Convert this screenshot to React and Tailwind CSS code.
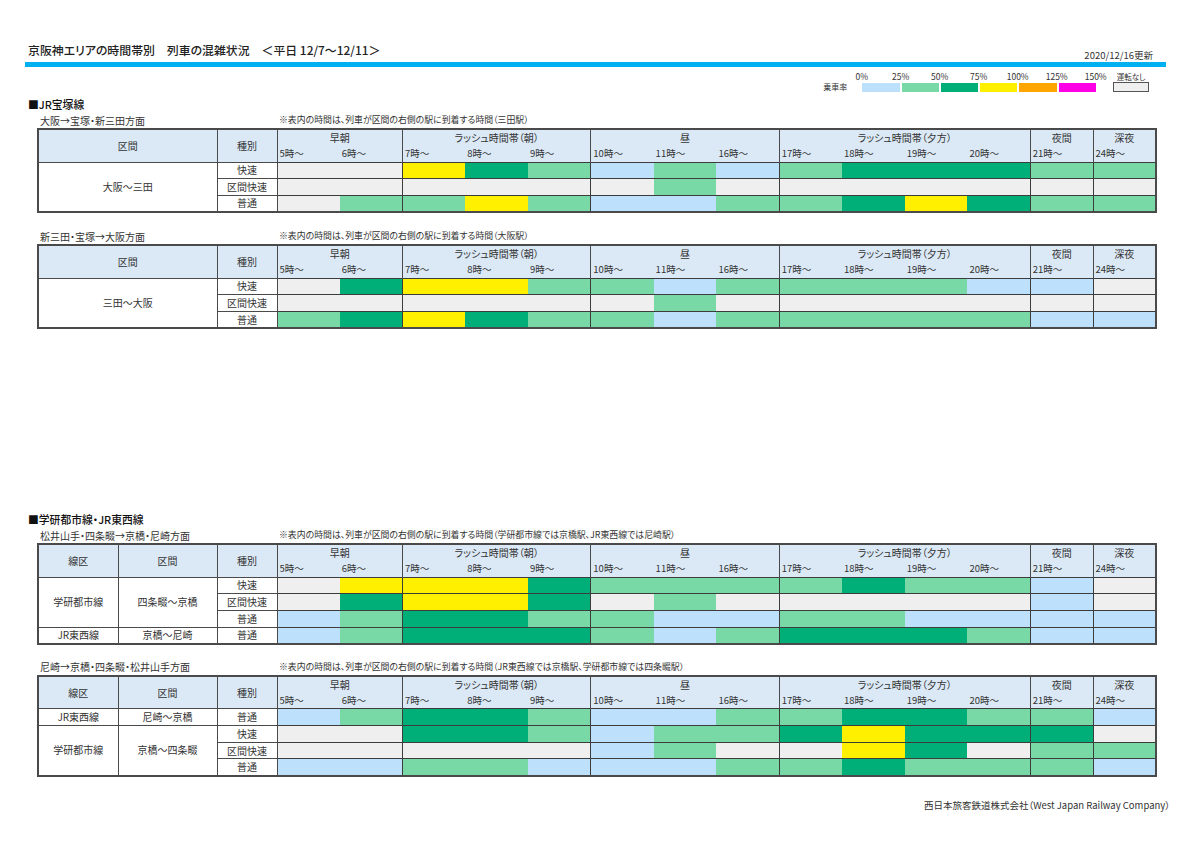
const HOURS = ['5時～', '6時～', '7時～', '8時～', '9時～', '10時～', '11時～', '16時～', '17時～', '18時～', '19時～', '20時～', '21時～', '24時～'];
const PERIODS = [
  ['早朝', 2],
  ['ラッシュ時間帯（朝）', 3],
  ['昼', 3],
  ['ラッシュ時間帯（夕方）', 4],
  ['夜間', 1],
  ['深夜', 1],
];
const PERIOD_STARTS = [2, 5, 8, 12, 13];

const COLORS = {
  g: 'bg-[#efefef]',
  b: 'bg-[#bde0fd]',
  l: 'bg-[#79d9a6]',
  d: 'bg-[#00ae78]',
  y: 'bg-[#fff000]',
};

const LEGEND = [
  ['0%', 'bg-[#bde0fd]'],
  ['25%', 'bg-[#79d9a6]'],
  ['50%', 'bg-[#00ae78]'],
  ['75%', 'bg-[#fff000]'],
  ['100%', 'bg-[#ffa500]'],
  ['125%', 'bg-[#ff00e6]'],
];

// cells: one letter per hour, split by period
const TABLES = [
  {
    title: '大阪→宝塚・新三田方面',
    note: '※表内の時間は、列車が区間の右側の駅に到着する時間（三田駅）',
    groups: [
      {
        section: '大阪～三田',
        rows: [
          ['快速', 'gg' + 'ydl' + 'blb' + 'lddd' + 'll'],
          ['区間快速', 'gg' + 'ggg' + 'glg' + 'gggg' + 'gg'],
          ['普通', 'gl' + 'lyl' + 'bbl' + 'ldyd' + 'll'],
        ],
      },
    ],
  },
  {
    title: '新三田・宝塚→大阪方面',
    note: '※表内の時間は、列車が区間の右側の駅に到着する時間（大阪駅）',
    groups: [
      {
        section: '三田～大阪',
        rows: [
          ['快速', 'gd' + 'yyl' + 'lbl' + 'lllb' + 'bg'],
          ['区間快速', 'gg' + 'ggg' + 'glg' + 'gggg' + 'gg'],
          ['普通', 'ld' + 'ydl' + 'lbl' + 'llll' + 'bb'],
        ],
      },
    ],
  },
  {
    title: '松井山手・四条畷→京橋・尼崎方面',
    note: '※表内の時間は、列車が区間の右側の駅に到着する時間（学研都市線では京橋駅、JR東西線では尼崎駅）',
    groups: [
      {
        line: '学研都市線',
        section: '四条畷～京橋',
        rows: [
          ['快速', 'gy' + 'yyd' + 'lll' + 'ldll' + 'bg'],
          ['区間快速', 'gd' + 'yyd' + 'glg' + 'gggg' + 'bg'],
          ['普通', 'bl' + 'ddl' + 'lbb' + 'llbb' + 'bb'],
        ],
      },
      {
        line: 'JR東西線',
        section: '京橋～尼崎',
        rows: [['普通', 'bl' + 'ddd' + 'lbl' + 'dddl' + 'bb']],
      },
    ],
  },
  {
    title: '尼崎→京橋・四条畷・松井山手方面',
    note: '※表内の時間は、列車が区間の右側の駅に到着する時間（JR東西線では京橋駅、学研都市線では四条畷駅）',
    groups: [
      {
        line: 'JR東西線',
        section: '尼崎～京橋',
        rows: [['普通', 'bl' + 'ddl' + 'bbl' + 'lddl' + 'lb']],
      },
      {
        line: '学研都市線',
        section: '京橋～四条畷',
        rows: [
          ['快速', 'gg' + 'ddl' + 'bll' + 'dydd' + 'dg'],
          ['区間快速', 'gg' + 'ggg' + 'blg' + 'gydg' + 'll'],
          ['普通', 'bb' + 'llb' + 'bbl' + 'ldll' + 'lb'],
        ],
      },
    ],
  },
];

const labelCell = 'border border-[#4a4a4a] p-0 text-center align-middle text-[10px] leading-none';

const CrowdTable = ({ table }) => {
  const hasLine = table.groups[0].line !== undefined;

  return (
    <table className="ml-[37px] w-[1118px] table-fixed border-collapse border-2 border-[#4a4a4a] text-[#333]">
      <colgroup>
        {hasLine ? (
          <>
            <col className="w-[80px]" />
            <col className="w-[99px]" />
          </>
        ) : (
          <col className="w-[179px]" />
        )}
        <col className="w-[60px]" />
        {HOURS.map((h) => (
          <col key={h} className="w-[62.78px]" />
        ))}
      </colgroup>
      <thead className="bg-[#dbe9f6]">
        <tr className="h-[17px]">
          {hasLine && (
            <th rowSpan={2} className={`${labelCell} font-normal`}>線区</th>
          )}
          <th rowSpan={2} className={`${labelCell} font-normal`}>区間</th>
          <th rowSpan={2} className={`${labelCell} font-normal`}>種別</th>
          {PERIODS.map(([name, span]) => (
            <th key={name} colSpan={span} className="border-l border-[#4a4a4a] p-0 text-center text-[10px] leading-none font-normal">
              {name}
            </th>
          ))}
        </tr>
        <tr className="h-[16px]">
          {HOURS.map((h, i) => (
            <th
              key={h}
              className={`p-0 pl-[2px] text-left text-[9.5px] leading-none font-normal ${PERIOD_STARTS.includes(i) ? 'border-l border-[#4a4a4a]' : ''}`}
            >
              {h}
            </th>
          ))}
        </tr>
      </thead>
      <tbody>
        {table.groups.map((group) =>
          group.rows.map(([kind, cells], rowIndex) => (
            <tr key={group.section + kind} className="h-[16.7px]">
              {rowIndex === 0 && hasLine && (
                <td rowSpan={group.rows.length} className={labelCell}>{group.line}</td>
              )}
              {rowIndex === 0 && (
                <td rowSpan={group.rows.length} className={labelCell}>{group.section}</td>
              )}
              <td className={labelCell}>{kind}</td>
              {cells.split('').map((c, i) => (
                <td
                  key={i}
                  className={`border-t border-b border-[#3c3c3c] p-0 ${COLORS[c]} ${PERIOD_STARTS.includes(i) ? 'border-l' : ''}`}
                />
              ))}
            </tr>
          )),
        )}
      </tbody>
    </table>
  );
};

const TableTitle = ({ title, note }) => (
  <div className="flex h-[15px] items-center pl-[40px] text-[#333]">
    <span className="w-[239px] text-[10px] leading-none">{title}</span>
    <span className="text-[8.9px] leading-none">{note}</span>
  </div>
);

const Legend = () => (
  <div className="flex h-[25px] items-end justify-end pr-[51px] text-[#333]">
    <span className="mr-[15px] mb-[1px] text-[8px] leading-none">乗車率</span>
    <div>
      <div className="-mx-[20px] mb-[3px] flex">
        {[...LEGEND.map((l) => l[0]), '150%'].map((label) => (
          <span key={label} className="w-[39px] text-center text-[8.5px] leading-none">{label}</span>
        ))}
      </div>
      <div className="flex gap-[2px]">
        {LEGEND.map(([label, color]) => (
          <div key={label} className={`h-[9px] w-[37.3px] ${color}`} />
        ))}
      </div>
    </div>
    <div className="ml-[17px] w-[36px]">
      <div className="mb-[2px] text-center text-[7.5px] leading-none whitespace-nowrap">運転なし</div>
      <div className="h-[10px] border border-[#555] bg-[#efefef]" />
    </div>
  </div>
);

export default function App() {
  return (
    <div className="h-[848px] w-[1200px] overflow-hidden bg-white font-['Noto_Sans_CJK_JP','Noto_Sans',sans-serif] [font-feature-settings:'palt']">
      <div className="flex h-[62px] items-end justify-between pr-[47px] pl-[28px] text-[#222]">
        <h1 className="mb-[5px] text-[11.9px] leading-[14px] font-medium whitespace-pre">京阪神エリアの時間帯別　列車の混雑状況　＜平日 12/7～12/11＞</h1>
        <span className="mb-[2px] text-[9.5px] leading-none text-[#333]">2020/12/16更新</span>
      </div>
      <div className="ml-[25px] h-[5px] w-[1141px] bg-[#00b0f0]" />

      <Legend />

      <h2 className="mt-[5px] ml-[28px] h-[14px] text-[10.8px] leading-[14px] font-medium text-[#111]">■JR宝塚線</h2>
      <div className="mt-[2px]">
        <TableTitle title={TABLES[0].title} note={TABLES[0].note} />
        <CrowdTable table={TABLES[0]} />
      </div>
      <div className="mt-[16px]">
        <TableTitle title={TABLES[1].title} note={TABLES[1].note} />
        <CrowdTable table={TABLES[1]} />
      </div>

      <h2 className="mt-[183px] ml-[28px] h-[14px] text-[10.8px] leading-[14px] font-medium text-[#111]">■学研都市線・JR東西線</h2>
      <div className="mt-[2px]">
        <TableTitle title={TABLES[2].title} note={TABLES[2].note} />
        <CrowdTable table={TABLES[2]} />
      </div>
      <div className="mt-[15px]">
        <TableTitle title={TABLES[3].title} note={TABLES[3].note} />
        <CrowdTable table={TABLES[3]} />
      </div>

      <div className="mt-[21px] pr-[30px] text-right text-[9.5px] leading-[14px] text-[#333]">
        西日本旅客鉄道株式会社（West Japan Railway Company）
      </div>
    </div>
  );
}
